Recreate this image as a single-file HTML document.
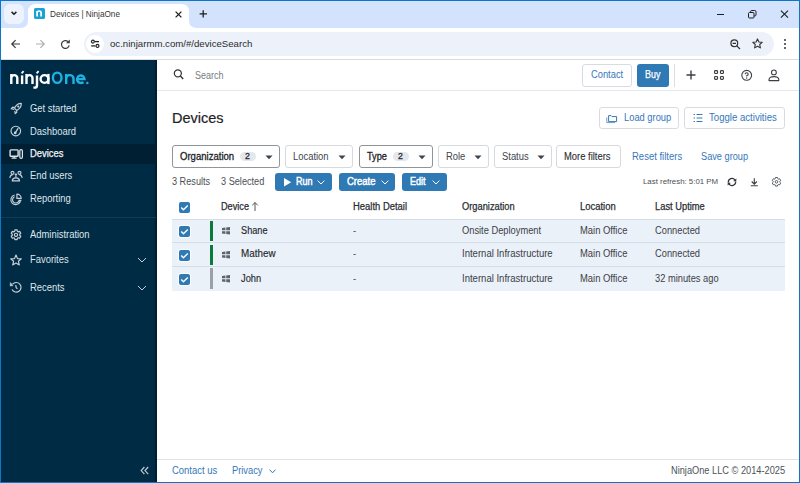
<!DOCTYPE html>
<html><head><meta charset="utf-8">
<style>
*{box-sizing:border-box;margin:0;padding:0}
html,body{width:800px;height:483px;overflow:hidden;background:#fff;font-family:"Liberation Sans",sans-serif}
.a{position:absolute}
.t{position:absolute;white-space:nowrap}
svg.a{overflow:visible}
</style></head><body>

<div class="a" style="left:0px;top:0px;width:800px;height:28px;background:#d3e3fd;"></div>
<div class="a" style="left:4px;top:4px;width:20px;height:20px;background:#edf2fc;border-radius:6px"></div>
<svg class="a" style="left:10px;top:10px;" width="8" height="8" viewBox="0 0 8 8"><path d="M1.6 1.9 L4 4.3 L6.4 1.9" fill="none" stroke="#1f1f1f" stroke-width="1.5"/></svg>
<svg class="a" style="left:20px;top:4px;" width="178" height="25" viewBox="0 0 178 25"><path d="M0 24 Q8 24 8 16 V8 Q8 0 16 0 H161 Q169 0 169 8 V16 Q169 24 177 24 V25 H0 Z" fill="#fff"/></svg>
<div class="a" style="left:34px;top:8px;width:11px;height:11px;background:#19a2d6;border-radius:1.5px"></div>
<svg class="a" style="left:34px;top:8px;" width="11" height="11" viewBox="0 0 11 11"><path d="M3.1 8.6 V2.9 M3.1 8.6 V5.0 A2.0 2.0 0 0 1 7.1 5.0 V8.6" fill="none" stroke="#fff" stroke-width="1.7"/></svg>
<div class="t" style="left:50px;top:10px;font-size:8.2px;line-height:9px;color:#363636;font-weight:normal;">Devices | NinjaOne</div>
<svg class="a" style="left:175px;top:11px;" width="7" height="7" viewBox="0 0 7 7"><path d="M0.6 0.6 L6.4 6.4 M6.4 0.6 L0.6 6.4" stroke="#1f1f1f" stroke-width="1.3"/></svg>
<svg class="a" style="left:199px;top:10px;" width="9" height="8" viewBox="0 0 9 8"><path d="M4.2 0.2 V7.6 M0.6 3.9 H8" stroke="#1f1f1f" stroke-width="1.3"/></svg>
<div class="a" style="left:717px;top:14px;width:7px;height:1px;background:#1f1f1f;"></div>
<svg class="a" style="left:748px;top:10px;" width="9" height="9" viewBox="0 0 9 9"><rect x="0.5" y="2.5" width="5.5" height="5.5" rx="1" fill="none" stroke="#1f1f1f"/><path d="M2.5 2.5 V1.8 Q2.5 0.5 3.8 0.5 H6.7 Q8 0.5 8 1.8 V4.7 Q8 6 6.7 6 H6" fill="none" stroke="#1f1f1f"/></svg>
<svg class="a" style="left:780px;top:10px;" width="9" height="9" viewBox="0 0 9 9"><path d="M0.9 0.6 L8 7.7 M8 0.6 L0.9 7.7" stroke="#1f1f1f" stroke-width="1.1"/></svg>
<div class="a" style="left:1px;top:28px;width:798px;height:31px;background:#fff;border-radius:7px 7px 0 0"></div>
<svg class="a" style="left:10px;top:39px;" width="11" height="10" viewBox="0 0 11 10"><path d="M10 5 H2 M5.6 1.2 L1.8 5 L5.6 8.8" fill="none" stroke="#3c3c3c" stroke-width="1.2"/></svg>
<svg class="a" style="left:35px;top:39px;" width="11" height="10" viewBox="0 0 11 10"><path d="M1 5 H9 M5.4 1.2 L9.2 5 L5.4 8.8" fill="none" stroke="#b0b0b0" stroke-width="1.2"/></svg>
<svg class="a" style="left:60px;top:39px;" width="11" height="11" viewBox="0 0 11 11"><path d="M9.2 6.4 A3.9 3.9 0 1 1 8.0 2.6" fill="none" stroke="#3c3c3c" stroke-width="1.2"/><path d="M9.8 0.5 V4.3 H6.0 Z" fill="#3c3c3c"/></svg>
<div class="a" style="left:84px;top:32px;width:690px;height:24px;background:#edf2fa;border-radius:12px"></div>
<div class="a" style="left:86px;top:35px;width:18px;height:18px;background:#fff;border-radius:9px"></div>
<svg class="a" style="left:90px;top:39px;" width="11" height="10" viewBox="0 0 11 10"><circle cx="2.9" cy="2.6" r="1.45" fill="none" stroke="#222" stroke-width="1.2"/><path d="M5.0 2.6 H9.0" stroke="#222" stroke-width="1.3"/><circle cx="7.5" cy="6.9" r="1.45" fill="none" stroke="#222" stroke-width="1.2"/><path d="M1.2 6.9 H5.4" stroke="#222" stroke-width="1.3"/></svg>
<div class="t" style="left:110px;top:38px;font-size:9.65px;line-height:11px;color:#2a2a2a;font-weight:normal;">oc.ninjarmm.com/#/deviceSearch</div>
<svg class="a" style="left:730px;top:39px;" width="11" height="10" viewBox="0 0 11 10"><circle cx="4.3" cy="4.3" r="3.4" fill="none" stroke="#333" stroke-width="1.2"/><path d="M6.8 6.8 L10 10 M2.6 4.3 H6" stroke="#333" stroke-width="1.2"/></svg>
<svg class="a" style="left:752px;top:38px;" width="11" height="11" viewBox="0 0 11 11"><path d="M5.5 0.9 L6.9 4 L10.2 4.3 L7.7 6.5 L8.4 9.9 L5.5 8.2 L2.6 9.9 L3.3 6.5 L0.8 4.3 L4.1 4 Z" fill="none" stroke="#333" stroke-width="1.1" stroke-linejoin="round"/></svg>
<div class="a" style="left:784px;top:39px;width:2px;height:2px;background:#333;border-radius:1px"></div>
<div class="a" style="left:784px;top:43px;width:2px;height:2px;background:#333;border-radius:1px"></div>
<div class="a" style="left:784px;top:47px;width:2px;height:2px;background:#333;border-radius:1px"></div>
<div class="a" style="left:0px;top:59px;width:800px;height:1px;background:#d9dcdf;"></div>
<div class="a" style="left:1px;top:60px;width:156px;height:422px;background:#002b45;"></div>
<div class="a" style="left:155px;top:60px;width:2px;height:422px;background:#001e33;"></div>
<div class="a" style="left:1px;top:144px;width:155px;height:20px;background:#001f33;"></div>
<div class="a" style="left:1px;top:217px;width:155px;height:1px;background:#0f3c58;"></div>
<svg class="a" style="left:0;top:0" width="100" height="100" viewBox="0 0 100 100"><path d="M11.3 73.9 V84.1 M11.3 84.1 V78.10 A3.00 3.00 0 0 1 17.3 78.10 V84.1" fill="none" stroke="#fff" stroke-width="2.4"/><path d="M22.1 75.4 V84.1" fill="none" stroke="#fff" stroke-width="2.4"/><path d="M21.6 73.4 L23.6 71.2" fill="none" stroke="#fff" stroke-width="1.8"/><path d="M26.5 73.9 V84.1 M26.5 84.1 V78.10 A3.00 3.00 0 0 1 32.5 78.10 V84.1" fill="none" stroke="#fff" stroke-width="2.4"/><path d="M37.0 75.4 V85.4 Q37.0 87.6 34.6 87.6 H33.4" fill="none" stroke="#fff" stroke-width="2.4"/><path d="M36.6 73.4 L38.6 71.2" fill="none" stroke="#fff" stroke-width="1.8"/><circle cx="44.5" cy="79.0" r="3.9" fill="none" stroke="#fff" stroke-width="2.4"/><path d="M48.4 73.9 V84.1" fill="none" stroke="#fff" stroke-width="2.4"/><ellipse cx="57.2" cy="77.75" rx="4.3" ry="5.15" fill="none" stroke="#1db2e2" stroke-width="2.4"/><path d="M66.2 73.9 V84.1 M66.2 84.1 V78.75 A3.65 3.65 0 0 1 73.5 78.75 V84.1" fill="none" stroke="#1db2e2" stroke-width="2.4"/><path d="M77.1 79.1 H84.5 A3.7 3.7 0 1 0 83.3 82.0" fill="none" stroke="#1db2e2" stroke-width="2.4"/><circle cx="87.35" cy="83.0" r="1.2" fill="#1db2e2"/></svg>
<div class="t" style="left:30px;top:103px;font-size:10px;line-height:11px;color:#dfe5ea;font-weight:normal;transform:scaleX(0.9400);transform-origin:0 0;">Get started</div>
<div class="t" style="left:30px;top:126px;font-size:10px;line-height:11px;color:#dfe5ea;font-weight:normal;transform:scaleX(0.9400);transform-origin:0 0;">Dashboard</div>
<div class="t" style="left:30px;top:148px;font-size:10px;line-height:11px;color:#f0f3f5;font-weight:normal;-webkit-text-stroke:0.25px #f0f3f5;transform:scaleX(0.9400);transform-origin:0 0;">Devices</div>
<div class="t" style="left:30px;top:170px;font-size:10px;line-height:11px;color:#dfe5ea;font-weight:normal;transform:scaleX(0.9400);transform-origin:0 0;">End users</div>
<div class="t" style="left:30px;top:193px;font-size:10px;line-height:11px;color:#dfe5ea;font-weight:normal;transform:scaleX(0.9400);transform-origin:0 0;">Reporting</div>
<div class="t" style="left:30px;top:229px;font-size:10px;line-height:11px;color:#dfe5ea;font-weight:normal;transform:scaleX(0.9400);transform-origin:0 0;">Administration</div>
<div class="t" style="left:30px;top:254px;font-size:10px;line-height:11px;color:#dfe5ea;font-weight:normal;transform:scaleX(0.9400);transform-origin:0 0;">Favorites</div>
<div class="t" style="left:30px;top:282px;font-size:10px;line-height:11px;color:#dfe5ea;font-weight:normal;transform:scaleX(0.9400);transform-origin:0 0;">Recents</div>
<svg class="a" style="left:8px;top:100px;" width="16" height="16" viewBox="0 0 16 16"><path d="M13.3 3.4 Q8.8 3.4 6.4 8.2 L8.6 10.4 Q13.4 8 13.3 3.4 Z" fill="none" stroke="#c8d0d8" stroke-width="1.15" stroke-linejoin="round"/><path d="M6.6 7.4 L4.6 7.2 L3.2 8.8 L6.2 9.4 M8.6 10.2 L8.8 12.2 L7.2 13.6 L6.8 10.8" fill="none" stroke="#c8d0d8" stroke-width="1.15" stroke-linejoin="round"/><circle cx="10.3" cy="6.6" r="1.1" fill="#c8d0d8"/></svg>
<svg class="a" style="left:8px;top:123px;" width="16" height="16" viewBox="0 0 16 16"><circle cx="7.8" cy="8" r="4.8" fill="none" stroke="#c8d0d8" stroke-width="1.15"/><path d="M7.4 9.6 L10.2 5.2" fill="none" stroke="#c8d0d8" stroke-width="1.3"/><circle cx="7.2" cy="9.9" r="1.4" fill="#c8d0d8"/></svg>
<svg class="a" style="left:7px;top:146px;" width="18" height="16" viewBox="0 0 18 16"><rect x="3.1" y="3.9" width="8" height="6.4" rx="0.8" fill="none" stroke="#dfe5ea" stroke-width="1.4"/><path d="M7.1 10.4 V11.8 M4.6 12.2 H9.6" stroke="#dfe5ea" stroke-width="1.3"/><rect x="12.8" y="3.6" width="2.6" height="8.8" rx="1.3" fill="none" stroke="#dfe5ea" stroke-width="1.2"/></svg>
<svg class="a" style="left:8px;top:168px;" width="16" height="16" viewBox="0 0 16 16"><circle cx="4.5" cy="4.8" r="1.5" fill="none" stroke="#c8d0d8" stroke-width="1.15"/><circle cx="11.5" cy="4.8" r="1.5" fill="none" stroke="#c8d0d8" stroke-width="1.15"/><path d="M1.8 9.8 Q2.4 6.9 4.6 6.6 M14.2 9.8 Q13.6 6.9 11.4 6.6" fill="none" stroke="#c8d0d8" stroke-width="1.15"/><ellipse cx="7.9" cy="6.5" rx="1.3" ry="1" fill="#c8d0d8"/><path d="M7.9 7.6 V9.4" fill="none" stroke="#c8d0d8" stroke-width="1.15"/><path d="M4.3 12.9 Q4.3 9.8 7.9 9.8 Q11.5 9.8 11.5 12.9 Z" fill="none" stroke="#c8d0d8" stroke-width="1.15" stroke-linejoin="round"/></svg>
<svg class="a" style="left:8px;top:191px;" width="16" height="16" viewBox="0 0 16 16"><path d="M6.6 4 A4.9 4.9 0 1 0 12.4 10.4" fill="none" stroke="#c8d0d8" stroke-width="1.15"/><path d="M6.6 5.8 A3.2 3.2 0 1 0 10.6 10.2" fill="none" stroke="#c8d0d8" stroke-width="1.15"/><path d="M8.9 3.1 A4.3 4.3 0 0 1 13.2 7.4 H8.9 Z" fill="none" stroke="#c8d0d8" stroke-width="1.15" stroke-linejoin="round"/><path d="M10.4 9.4 H13.4 M10.2 10.8 H12.6" fill="none" stroke="#c8d0d8" stroke-width="1.15"/></svg>
<svg class="a" style="left:7px;top:226px;" width="18" height="18" viewBox="0 0 18 18"><path d="M7.61 5.37 L7.88 3.93 L10.12 3.93 L10.39 5.37 L11.28 5.88 L12.66 5.39 L13.78 7.34 L12.66 8.29 L12.66 9.31 L13.78 10.26 L12.66 12.21 L11.28 11.72 L10.39 12.23 L10.12 13.67 L7.88 13.67 L7.61 12.23 L6.72 11.72 L5.34 12.21 L4.22 10.26 L5.34 9.31 L5.34 8.29 L4.22 7.34 L5.34 5.39 L6.72 5.88 Z" fill="none" stroke="#c8d0d8" stroke-width="1.15" stroke-linejoin="round"/><circle cx="9" cy="8.8" r="1.6" fill="none" stroke="#c8d0d8" stroke-width="1.15"/></svg>
<svg class="a" style="left:7px;top:252px;" width="18" height="16" viewBox="0 0 18 16"><path d="M9 3 L10.5 6.6 L14.3 6.9 L11.4 9.3 L12.3 13 L9 11 L5.7 13 L6.6 9.3 L3.7 6.9 L7.5 6.6 Z" fill="none" stroke="#c8d0d8" stroke-width="1.15" stroke-linejoin="round"/></svg>
<svg class="a" style="left:7px;top:278px;" width="18" height="18" viewBox="0 0 18 18"><path d="M5.6 6.2 A4.8 4.8 0 1 1 5.0 11.6" fill="none" stroke="#c8d0d8" stroke-width="1.15"/><path d="M3.4 4.6 L6 7.6 L3.2 8 Z" fill="#c8d0d8" stroke="#c8d0d8" stroke-width="0.6" stroke-linejoin="round"/><path d="M8.8 7 L9.1 9.4 L10.4 10.8" fill="none" stroke="#c8d0d8" stroke-width="1.15"/></svg>
<svg class="a" style="left:137px;top:257px;" width="10" height="6" viewBox="0 0 10 6"><path d="M1 1 L5 5 L9 1" fill="none" stroke="#c5ced6" stroke-width="1"/></svg>
<svg class="a" style="left:137px;top:285px;" width="10" height="6" viewBox="0 0 10 6"><path d="M1 1 L5 5 L9 1" fill="none" stroke="#c5ced6" stroke-width="1"/></svg>
<svg class="a" style="left:140px;top:466px;" width="9" height="9" viewBox="0 0 9 9"><path d="M4.4 1 L1.2 4.6 L4.4 8.2 M8.2 1 L5 4.6 L8.2 8.2" fill="none" stroke="#b9c3cc" stroke-width="1.25"/></svg>
<svg class="a" style="left:173px;top:69px;" width="12" height="12" viewBox="0 0 12 12"><circle cx="4.85" cy="4.35" r="3.55" fill="none" stroke="#333" stroke-width="1.2"/><path d="M7.4 6.9 L10.2 9.9" stroke="#333" stroke-width="1.4"/></svg>
<div class="t" style="left:195px;top:70px;font-size:10px;line-height:11px;color:#767c82;font-weight:normal;transform:scaleX(0.9000);transform-origin:0 0;">Search</div>
<div class="a" style="left:582px;top:64px;width:50px;height:23px;background:#fff;border:1px solid #d8dce1;border-radius:3px"></div>
<div class="t" style="left:591px;top:69px;font-size:10px;line-height:11px;color:#3677ba;font-weight:normal;transform:scaleX(0.9330);transform-origin:0 0;">Contact</div>
<div class="a" style="left:637px;top:64px;width:32px;height:23px;background:#2f79b5;border-radius:3px"></div>
<div class="t" style="left:645px;top:69px;font-size:10px;line-height:11px;color:#fff;font-weight:normal;-webkit-text-stroke:0.25px currentColor;transform:scaleX(0.8900);transform-origin:0 0;">Buy</div>
<div class="a" style="left:674px;top:64px;width:1px;height:23px;background:#dadde2;"></div>
<svg class="a" style="left:686px;top:70px;" width="10" height="10" viewBox="0 0 10 10"><path d="M5 0.5 V9.5 M0.5 5 H9.5" stroke="#3b3f44" stroke-width="1.4"/></svg>
<svg class="a" style="left:714px;top:70px;" width="10" height="10" viewBox="0 0 10 10"><rect x="0.6" y="0.6" width="2.9" height="2.9" rx="0.8" fill="none" stroke="#3b3f44" stroke-width="1.2"/><rect x="0.6" y="6.5" width="2.9" height="2.9" rx="0.8" fill="none" stroke="#3b3f44" stroke-width="1.2"/><rect x="6.5" y="0.6" width="2.9" height="2.9" rx="0.8" fill="none" stroke="#3b3f44" stroke-width="1.2"/><rect x="6.5" y="6.5" width="2.9" height="2.9" rx="0.8" fill="none" stroke="#3b3f44" stroke-width="1.2"/></svg>
<svg class="a" style="left:741px;top:70px;" width="12" height="12" viewBox="0 0 12 12"><circle cx="5.7" cy="5.3" r="4.9" fill="none" stroke="#3b3f44" stroke-width="1.1"/><path d="M4.2 4.3 Q4.2 2.8 5.7 2.8 Q7.2 2.8 7.2 4.2 Q7.2 5.1 5.7 5.7 V6.5" fill="none" stroke="#3b3f44" stroke-width="1.1"/><circle cx="5.7" cy="8" r="0.65" fill="#3b3f44"/></svg>
<svg class="a" style="left:768px;top:69px;" width="12" height="13" viewBox="0 0 12 13"><circle cx="5.9" cy="3.4" r="2.4" fill="none" stroke="#3b3f44" stroke-width="1.1"/><path d="M1 11.6 V10.6 Q1 7.6 5.9 7.6 Q10.8 7.6 10.8 10.6 V11.6 Z" fill="none" stroke="#3b3f44" stroke-width="1.1" stroke-linejoin="round"/></svg>
<div class="a" style="left:157px;top:90px;width:642px;height:1px;background:#e4e7eb;"></div>
<div class="t" style="left:172px;top:110px;font-size:14.5px;line-height:16px;color:#1e2227;font-weight:normal;-webkit-text-stroke:0.2px #1e2227;">Devices</div>
<div class="a" style="left:599px;top:107px;width:80px;height:22px;background:#fff;border:1px solid #d8dce1;border-radius:3px"></div>
<svg class="a" style="left:606px;top:113px;" width="13" height="10" viewBox="0 0 13 10"><path d="M2.6 2.6 H5 L6 3.6 H10.6 V8.6 H2.6 Z" fill="none" stroke="#3677ba" stroke-width="1"/><path d="M0.8 4.4 V9.6 H9" fill="none" stroke="#3677ba" stroke-width="1" opacity="0.7"/></svg>
<div class="t" style="left:624px;top:112px;font-size:10px;line-height:11px;color:#3677ba;font-weight:normal;transform:scaleX(0.9340);transform-origin:0 0;">Load group</div>
<div class="a" style="left:684px;top:107px;width:101px;height:22px;background:#fff;border:1px solid #d8dce1;border-radius:3px"></div>
<svg class="a" style="left:693px;top:113px;" width="10" height="10" viewBox="0 0 10 10"><path d="M0.6 1.5 H2 M0.6 5 H2 M0.6 8.5 H2 M3.6 1.5 H9.4 M3.6 5 H9.4 M3.6 8.5 H9.4" stroke="#3677ba" stroke-width="1.2"/></svg>
<div class="t" style="left:709px;top:112px;font-size:10px;line-height:11px;color:#3677ba;font-weight:normal;transform:scaleX(0.9600);transform-origin:0 0;">Toggle activities</div>
<div class="a" style="left:172px;top:145px;width:108px;height:23px;background:#fff;border:1px solid #8f959b;border-radius:3px"></div>
<div class="t" style="left:180px;top:151px;font-size:10px;line-height:11px;color:#202328;font-weight:normal;-webkit-text-stroke:0.3px #202328;transform:scaleX(0.9550);transform-origin:0 0;">Organization</div>
<div class="a" style="left:240px;top:152px;width:16px;height:9px;background:#e4e7eb;border-radius:4.5px"></div>
<div class="t" style="left:245px;top:151px;font-size:8.8px;line-height:10px;color:#2b2f33;font-weight:normal;-webkit-text-stroke:0.3px #2b2f33;">2</div>
<svg class="a" style="left:265px;top:155px;" width="8" height="5" viewBox="0 0 8 5"><path d="M0.5 0.5 H7.5 L4 4.3 Z" fill="#3f444a"/></svg>
<div class="a" style="left:285px;top:145px;width:68px;height:23px;background:#fff;border:1px solid #d6dade;border-radius:3px"></div>
<div class="t" style="left:293px;top:151px;font-size:10px;line-height:11px;color:#41464c;font-weight:normal;transform:scaleX(0.9400);transform-origin:0 0;">Location</div>
<svg class="a" style="left:338px;top:155px;" width="8" height="5" viewBox="0 0 8 5"><path d="M0.5 0.5 H7.5 L4 4.3 Z" fill="#3f444a"/></svg>
<div class="a" style="left:359px;top:145px;width:74px;height:23px;background:#fff;border:1px solid #8f959b;border-radius:3px"></div>
<div class="t" style="left:367px;top:151px;font-size:10px;line-height:11px;color:#202328;font-weight:normal;-webkit-text-stroke:0.3px #202328;transform:scaleX(0.9200);transform-origin:0 0;">Type</div>
<div class="a" style="left:393px;top:152px;width:16px;height:9px;background:#e4e7eb;border-radius:4.5px"></div>
<div class="t" style="left:398px;top:151px;font-size:8.8px;line-height:10px;color:#2b2f33;font-weight:normal;-webkit-text-stroke:0.3px #2b2f33;">2</div>
<svg class="a" style="left:418px;top:155px;" width="8" height="5" viewBox="0 0 8 5"><path d="M0.5 0.5 H7.5 L4 4.3 Z" fill="#3f444a"/></svg>
<div class="a" style="left:438px;top:145px;width:51px;height:23px;background:#fff;border:1px solid #d6dade;border-radius:3px"></div>
<div class="t" style="left:446px;top:151px;font-size:10px;line-height:11px;color:#41464c;font-weight:normal;transform:scaleX(0.9400);transform-origin:0 0;">Role</div>
<svg class="a" style="left:474px;top:155px;" width="8" height="5" viewBox="0 0 8 5"><path d="M0.5 0.5 H7.5 L4 4.3 Z" fill="#3f444a"/></svg>
<div class="a" style="left:494px;top:145px;width:58px;height:23px;background:#fff;border:1px solid #d6dade;border-radius:3px"></div>
<div class="t" style="left:502px;top:151px;font-size:10px;line-height:11px;color:#41464c;font-weight:normal;transform:scaleX(0.9400);transform-origin:0 0;">Status</div>
<svg class="a" style="left:537px;top:155px;" width="8" height="5" viewBox="0 0 8 5"><path d="M0.5 0.5 H7.5 L4 4.3 Z" fill="#3f444a"/></svg>
<div class="a" style="left:556px;top:145px;width:65px;height:23px;background:#fff;border:1px solid #d6dade;border-radius:3px"></div>
<div class="t" style="left:564px;top:151px;font-size:10px;line-height:11px;color:#2a2d32;font-weight:normal;-webkit-text-stroke:0.1px #2a2d32;transform:scaleX(0.9400);transform-origin:0 0;">More filters</div>
<div class="t" style="left:632px;top:151px;font-size:10px;line-height:11px;color:#3677ba;font-weight:normal;transform:scaleX(0.9500);transform-origin:0 0;">Reset filters</div>
<div class="t" style="left:701px;top:151px;font-size:10px;line-height:11px;color:#3677ba;font-weight:normal;transform:scaleX(0.9200);transform-origin:0 0;">Save group</div>
<div class="t" style="left:172px;top:176px;font-size:10px;line-height:11px;color:#4b5056;font-weight:normal;transform:scaleX(0.9140);transform-origin:0 0;">3 Results</div>
<div class="t" style="left:221px;top:176px;font-size:10px;line-height:11px;color:#4b5056;font-weight:normal;transform:scaleX(0.9160);transform-origin:0 0;">3 Selected</div>
<div class="a" style="left:275px;top:173px;width:57px;height:18px;background:#2f79b5;border-radius:3px"></div>
<div class="t" style="left:296px;top:176px;font-size:10px;line-height:11px;color:#fff;font-weight:normal;-webkit-text-stroke:0.45px #fff;transform:scaleX(0.9000);transform-origin:0 0;">Run</div>
<svg class="a" style="left:317px;top:180px;" width="8" height="5" viewBox="0 0 8 5"><path d="M0.6 0.6 L4 4 L7.4 0.6" fill="none" stroke="#fff" stroke-width="1"/></svg>
<svg class="a" style="left:284px;top:178px;" width="8" height="9" viewBox="0 0 8 9"><path d="M0 0 L7.2 4.2 L0 8.4 Z" fill="#fff"/></svg>
<div class="a" style="left:339px;top:173px;width:56px;height:18px;background:#2f79b5;border-radius:3px"></div>
<div class="t" style="left:347px;top:176px;font-size:10px;line-height:11px;color:#fff;font-weight:normal;-webkit-text-stroke:0.45px #fff;transform:scaleX(0.9500);transform-origin:0 0;">Create</div>
<svg class="a" style="left:381px;top:180px;" width="8" height="5" viewBox="0 0 8 5"><path d="M0.6 0.6 L4 4 L7.4 0.6" fill="none" stroke="#fff" stroke-width="1"/></svg>
<div class="a" style="left:402px;top:173px;width:45px;height:18px;background:#2f79b5;border-radius:3px"></div>
<div class="t" style="left:410px;top:176px;font-size:10px;line-height:11px;color:#fff;font-weight:normal;-webkit-text-stroke:0.45px #fff;transform:scaleX(0.9000);transform-origin:0 0;">Edit</div>
<svg class="a" style="left:432px;top:180px;" width="8" height="5" viewBox="0 0 8 5"><path d="M0.6 0.6 L4 4 L7.4 0.6" fill="none" stroke="#fff" stroke-width="1"/></svg>
<div class="t" style="left:643px;top:177px;font-size:7.87px;line-height:9px;color:#4b5056;font-weight:normal;">Last refresh: 5:01 PM</div>
<svg class="a" style="left:727px;top:177px;" width="10" height="10" viewBox="0 0 10 10"><path d="M1.3 5.2 A3.7 3.7 0 0 1 7.9 2.9" fill="none" stroke="#2f3337" stroke-width="1.3"/><path d="M9.4 1.6 L9.2 4.8 L6.2 4.0 Z" fill="#2f3337"/><path d="M8.7 5.0 A3.7 3.7 0 0 1 2.1 7.1" fill="none" stroke="#2f3337" stroke-width="1.3"/><path d="M0.6 8.4 L0.8 5.2 L3.8 6.0 Z" fill="#2f3337"/></svg>
<svg class="a" style="left:750px;top:178px;" width="9" height="9" viewBox="0 0 9 9"><path d="M4.3 0.2 V6.0 M1.7 3.5 L4.3 6.1 L6.9 3.5 M0.8 7.8 H7.8" fill="none" stroke="#3b3f44" stroke-width="1.1"/></svg>
<svg class="a" style="left:772px;top:177px;" width="10" height="10" viewBox="0 0 10 10"><path d="M3.16 1.79 L3.44 0.53 L5.56 0.53 L5.84 1.79 L6.44 2.13 L7.67 1.74 L8.73 3.59 L7.78 4.46 L7.78 5.14 L8.73 6.01 L7.67 7.86 L6.44 7.47 L5.84 7.81 L5.56 9.07 L3.44 9.07 L3.16 7.81 L2.56 7.47 L1.33 7.86 L0.27 6.01 L1.22 5.14 L1.22 4.46 L0.27 3.59 L1.33 1.74 L2.56 2.13 Z" fill="none" stroke="#50555a" stroke-width="0.95" stroke-linejoin="round"/><circle cx="4.5" cy="4.8" r="1.3" fill="none" stroke="#50555a" stroke-width="0.95"/></svg>
<div class="a" style="left:179px;top:202px;width:11px;height:11px;background:#2f79b5;border-radius:2px;box-shadow:0 0 0 1px #fff"></div>
<svg class="a" style="left:179px;top:202px;" width="11" height="11" viewBox="0 0 11 11"><path d="M2.2 5.6 L4.4 7.8 L8.8 3.4" fill="none" stroke="#fff" stroke-width="1.4"/></svg>
<div class="t" style="left:221px;top:201px;font-size:10px;line-height:11px;color:#2a2e33;font-weight:normal;-webkit-text-stroke:0.25px currentColor;transform:scaleX(0.9160);transform-origin:0 0;">Device</div>
<svg class="a" style="left:251px;top:202px;" width="8" height="10" viewBox="0 0 8 10"><path d="M4 0.6 V9 M1.2 3.4 L4 0.6 L6.8 3.4" fill="none" stroke="#555" stroke-width="1"/></svg>
<div class="t" style="left:353px;top:201px;font-size:10px;line-height:11px;color:#2a2e33;font-weight:normal;-webkit-text-stroke:0.25px currentColor;transform:scaleX(0.9430);transform-origin:0 0;">Health Detail</div>
<div class="t" style="left:462px;top:201px;font-size:10px;line-height:11px;color:#2a2e33;font-weight:normal;-webkit-text-stroke:0.25px currentColor;transform:scaleX(0.9290);transform-origin:0 0;">Organization</div>
<div class="t" style="left:580px;top:201px;font-size:10px;line-height:11px;color:#2a2e33;font-weight:normal;-webkit-text-stroke:0.25px currentColor;transform:scaleX(0.9440);transform-origin:0 0;">Location</div>
<div class="t" style="left:655px;top:201px;font-size:10px;line-height:11px;color:#2a2e33;font-weight:normal;-webkit-text-stroke:0.25px currentColor;transform:scaleX(0.9330);transform-origin:0 0;">Last Uptime</div>
<div class="a" style="left:172px;top:219px;width:613px;height:72px;background:#ebf1f9;"></div>
<div class="a" style="left:172px;top:219px;width:613px;height:1px;background:#d5dde8;"></div>
<div class="a" style="left:179px;top:226px;width:11px;height:11px;background:#2f79b5;border-radius:2px;box-shadow:0 0 0 1px #fff"></div>
<svg class="a" style="left:179px;top:226px;" width="11" height="11" viewBox="0 0 11 11"><path d="M2.2 5.6 L4.4 7.8 L8.8 3.4" fill="none" stroke="#fff" stroke-width="1.4"/></svg>
<div class="a" style="left:210px;top:221px;width:3px;height:20px;background:#0b7a3b;"></div>
<svg class="a" style="left:222px;top:227px;" width="8" height="8" viewBox="0 0 8 8"><path d="M0 0.9 L3.4 0.5 V3.2 H0 Z M4.2 0.4 L8 0 V3.2 H4.2 Z M0 4.2 H3.4 V6.9 L0 6.5 Z M4.2 4.2 H8 V7.4 L4.2 7.0 Z" fill="#5f6469"/></svg>
<div class="t" style="left:241px;top:225px;font-size:10px;line-height:11px;color:#26292e;font-weight:normal;-webkit-text-stroke:0.15px #26292e;transform:scaleX(0.9200);transform-origin:0 0;">Shane</div>
<div class="t" style="left:353px;top:225px;font-size:10px;line-height:11px;color:#50565c;font-weight:normal;transform:scaleX(0.9400);transform-origin:0 0;">-</div>
<div class="t" style="left:462px;top:225px;font-size:10px;line-height:11px;color:#3b4046;font-weight:normal;transform:scaleX(0.9300);transform-origin:0 0;">Onsite Deployment</div>
<div class="t" style="left:580px;top:225px;font-size:10px;line-height:11px;color:#3b4046;font-weight:normal;transform:scaleX(0.9400);transform-origin:0 0;">Main Office</div>
<div class="t" style="left:655px;top:225px;font-size:10px;line-height:11px;color:#3b4046;font-weight:normal;transform:scaleX(0.9300);transform-origin:0 0;">Connected</div>
<div class="a" style="left:172px;top:242px;width:613px;height:1px;background:#d5dde8;"></div>
<div class="a" style="left:179px;top:250px;width:11px;height:11px;background:#2f79b5;border-radius:2px;box-shadow:0 0 0 1px #fff"></div>
<svg class="a" style="left:179px;top:250px;" width="11" height="11" viewBox="0 0 11 11"><path d="M2.2 5.6 L4.4 7.8 L8.8 3.4" fill="none" stroke="#fff" stroke-width="1.4"/></svg>
<div class="a" style="left:210px;top:245px;width:3px;height:20px;background:#0b7a3b;"></div>
<svg class="a" style="left:222px;top:251px;" width="8" height="8" viewBox="0 0 8 8"><path d="M0 0.9 L3.4 0.5 V3.2 H0 Z M4.2 0.4 L8 0 V3.2 H4.2 Z M0 4.2 H3.4 V6.9 L0 6.5 Z M4.2 4.2 H8 V7.4 L4.2 7.0 Z" fill="#5f6469"/></svg>
<div class="t" style="left:241px;top:248px;font-size:10px;line-height:11px;color:#26292e;font-weight:normal;-webkit-text-stroke:0.15px #26292e;transform:scaleX(0.9850);transform-origin:0 0;">Mathew</div>
<div class="t" style="left:353px;top:248px;font-size:10px;line-height:11px;color:#50565c;font-weight:normal;transform:scaleX(0.9400);transform-origin:0 0;">-</div>
<div class="t" style="left:462px;top:248px;font-size:10px;line-height:11px;color:#3b4046;font-weight:normal;transform:scaleX(0.9540);transform-origin:0 0;">Internal Infrastructure</div>
<div class="t" style="left:580px;top:248px;font-size:10px;line-height:11px;color:#3b4046;font-weight:normal;transform:scaleX(0.9400);transform-origin:0 0;">Main Office</div>
<div class="t" style="left:655px;top:248px;font-size:10px;line-height:11px;color:#3b4046;font-weight:normal;transform:scaleX(0.9300);transform-origin:0 0;">Connected</div>
<div class="a" style="left:172px;top:266px;width:613px;height:1px;background:#d5dde8;"></div>
<div class="a" style="left:179px;top:274px;width:11px;height:11px;background:#2f79b5;border-radius:2px;box-shadow:0 0 0 1px #fff"></div>
<svg class="a" style="left:179px;top:274px;" width="11" height="11" viewBox="0 0 11 11"><path d="M2.2 5.6 L4.4 7.8 L8.8 3.4" fill="none" stroke="#fff" stroke-width="1.4"/></svg>
<div class="a" style="left:210px;top:268px;width:3px;height:21px;background:#9aa0a6;"></div>
<svg class="a" style="left:222px;top:275px;" width="8" height="8" viewBox="0 0 8 8"><path d="M0 0.9 L3.4 0.5 V3.2 H0 Z M4.2 0.4 L8 0 V3.2 H4.2 Z M0 4.2 H3.4 V6.9 L0 6.5 Z M4.2 4.2 H8 V7.4 L4.2 7.0 Z" fill="#5f6469"/></svg>
<div class="t" style="left:241px;top:273px;font-size:10px;line-height:11px;color:#26292e;font-weight:normal;-webkit-text-stroke:0.15px #26292e;transform:scaleX(0.9300);transform-origin:0 0;">John</div>
<div class="t" style="left:353px;top:273px;font-size:10px;line-height:11px;color:#50565c;font-weight:normal;transform:scaleX(0.9400);transform-origin:0 0;">-</div>
<div class="t" style="left:462px;top:273px;font-size:10px;line-height:11px;color:#3b4046;font-weight:normal;transform:scaleX(0.9540);transform-origin:0 0;">Internal Infrastructure</div>
<div class="t" style="left:580px;top:273px;font-size:10px;line-height:11px;color:#3b4046;font-weight:normal;transform:scaleX(0.9400);transform-origin:0 0;">Main Office</div>
<div class="t" style="left:655px;top:273px;font-size:10px;line-height:11px;color:#3b4046;font-weight:normal;transform:scaleX(0.9300);transform-origin:0 0;">32 minutes ago</div>
<div class="a" style="left:157px;top:459px;width:642px;height:1px;background:#dfe3e8;"></div>
<div class="t" style="left:172px;top:465px;font-size:10px;line-height:11px;color:#3677ba;font-weight:normal;transform:scaleX(0.9470);transform-origin:0 0;">Contact us</div>
<div class="t" style="left:232px;top:465px;font-size:10px;line-height:11px;color:#3677ba;font-weight:normal;transform:scaleX(0.9300);transform-origin:0 0;">Privacy</div>
<svg class="a" style="left:269px;top:469px;" width="7" height="5" viewBox="0 0 7 5"><path d="M0.5 0.6 L3.5 3.8 L6.5 0.6" fill="none" stroke="#3677ba" stroke-width="1"/></svg>
<div class="t" style="left:671px;top:465px;font-size:10px;line-height:11px;color:#4d5359;font-weight:normal;transform:scaleX(0.9230);transform-origin:0 0;">NinjaOne LLC © 2014-2025</div>
<div class="a" style="left:0;top:0;width:800px;height:483px;border:1px solid #0a77c9;z-index:50"></div>
</body></html>
